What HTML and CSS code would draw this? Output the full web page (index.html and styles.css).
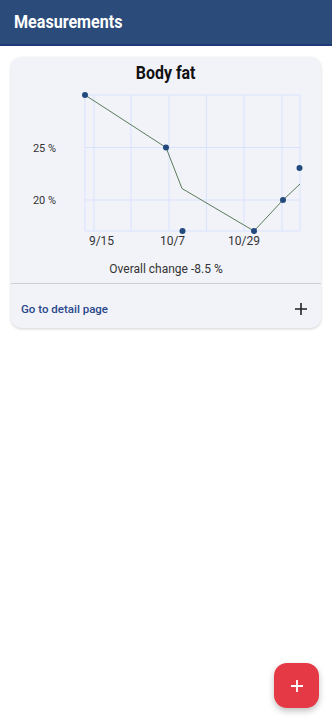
FILE: index.html
```html
<!DOCTYPE html>
<html>
<head>
<meta charset="utf-8">
<link rel="stylesheet" href="styles.css">
</head>
<body>
<header class="appbar"><h1 class="appbar-title">Measurements</h1></header>
<main class="content">
  <section class="card">
    <h2 class="card-title"><span class="card-title-text">Body fat</span></h2>
    <svg class="chart" width="310" height="170" viewBox="11 84 310 170">
      <g class="grid">
        <line x1="85" y1="95" x2="300" y2="95"/>
        <line x1="85" y1="147.5" x2="300" y2="147.5"/>
        <line x1="85" y1="200" x2="300" y2="200"/>
        <line x1="85" y1="231" x2="300" y2="231"/>
        <line x1="85" y1="95" x2="85" y2="231"/>
        <line x1="94" y1="95" x2="94" y2="231"/>
        <line x1="131" y1="95" x2="131" y2="231"/>
        <line x1="169" y1="95" x2="169" y2="231"/>
        <line x1="206.5" y1="95" x2="206.5" y2="231"/>
        <line x1="244" y1="95" x2="244" y2="231"/>
        <line x1="282" y1="95" x2="282" y2="231"/>
        <line x1="300" y1="95" x2="300" y2="231"/>
      </g>
      <polyline class="series" points="85,95 166,147.5 182,188.5 254,231 283,200 300,184"/>
      <g class="dots">
        <circle cx="85" cy="95" r="3"/>
        <circle cx="166" cy="147.5" r="3"/>
        <circle cx="182.5" cy="231" r="3"/>
        <circle cx="254" cy="231" r="3"/>
        <circle cx="283" cy="200" r="3"/>
        <circle cx="299.5" cy="168" r="3"/>
      </g>
      <g class="ylabels">
        <text x="44.5" y="151.5">25 %</text>
        <text x="44.5" y="204">20 %</text>
      </g>
      <g class="xlabels">
        <text x="101.5" y="245">9/15</text>
        <text x="172.5" y="245">10/7</text>
        <text x="244" y="245">10/29</text>
      </g>
    </svg>
    <p class="change">Overall change -8.5 %</p>
    <div class="card-footer">
      <span class="detail-link">Go to detail page</span>
      <svg class="plus" width="14" height="14" viewBox="0 0 14 14"><path d="M7 1v12M1 7h12"/></svg>
    </div>
  </section>
</main>
<button class="fab" aria-label="Add">
  <svg width="14" height="14" viewBox="0 0 14 14"><path d="M7 1v12M1 7h12"/></svg>
</button>
</body>
</html>
```
FILE: styles.css
```css
html, body {
  margin: 0;
  padding: 0;
  background: #ffffff;
  font-family: Roboto, "Noto Sans", sans-serif;
  height: 100%;
}
.appbar {
  height: 44px;
  background: #2b4c7b;
  border-bottom: 2px solid #1e3a78;
  display: flex;
  align-items: center;
  padding: 0 14px;
}
.appbar-title {
  margin: 0;
  color: #ffffff;
  font-size: 18.5px;
  font-weight: 700;
  transform: scaleX(0.87);
  transform-origin: left center;
}
.content {
  padding: 11px 11px;
}
.card {
  background: #f2f3f9;
  border-radius: 10px;
  box-shadow: 0 1px 3px rgba(0,0,0,0.18);
  display: flex;
  flex-direction: column;
  overflow: hidden;
}
.card-title {
  margin: 0;
  padding-top: 5px;
  height: 22px;
  line-height: 22px;
  text-align: center;
  font-size: 18.5px;
  font-weight: 700;
  color: #111111;
}
.card-title-text {
  display: inline-block;
  transform: scaleX(0.86);
}
.chart {
  display: block;
}
.grid line {
  stroke: #d9e3ff;
  stroke-width: 1;
}
.series {
  fill: none;
  stroke: #5b7a5a;
  stroke-width: 1;
}
.dots circle {
  fill: #234a7e;
}
.ylabels text, .xlabels text {
  font-family: Roboto, "Noto Sans", sans-serif;
  fill: #333333;
  text-anchor: middle;
}
.ylabels text { font-size: 11px; }
.xlabels text { font-size: 12px; }
.change {
  margin: 7px 0 6px;
  line-height: 16px;
  text-align: center;
  font-size: 12px;
  color: #333333;
}
.card-footer {
  border-top: 1px solid #cfd0d6;
  display: flex;
  align-items: center;
  justify-content: space-between;
  padding: 18px 13px 12px 10px;
}
.detail-link {
  font-size: 11.5px;
  font-weight: 500;
  color: #29488a;
  line-height: 14px;
}
.plus path {
  stroke: #222222;
  stroke-width: 1.6;
  fill: none;
}
.fab {
  position: fixed;
  right: 13px;
  bottom: 12px;
  width: 45px;
  height: 45px;
  border: none;
  border-radius: 13px;
  background: #e63946;
  box-shadow: 0 3px 6px rgba(0,0,0,0.25);
  display: flex;
  align-items: center;
  justify-content: center;
  padding: 0;
}
.fab path {
  stroke: #ffffff;
  stroke-width: 1.8;
  fill: none;
}
```
